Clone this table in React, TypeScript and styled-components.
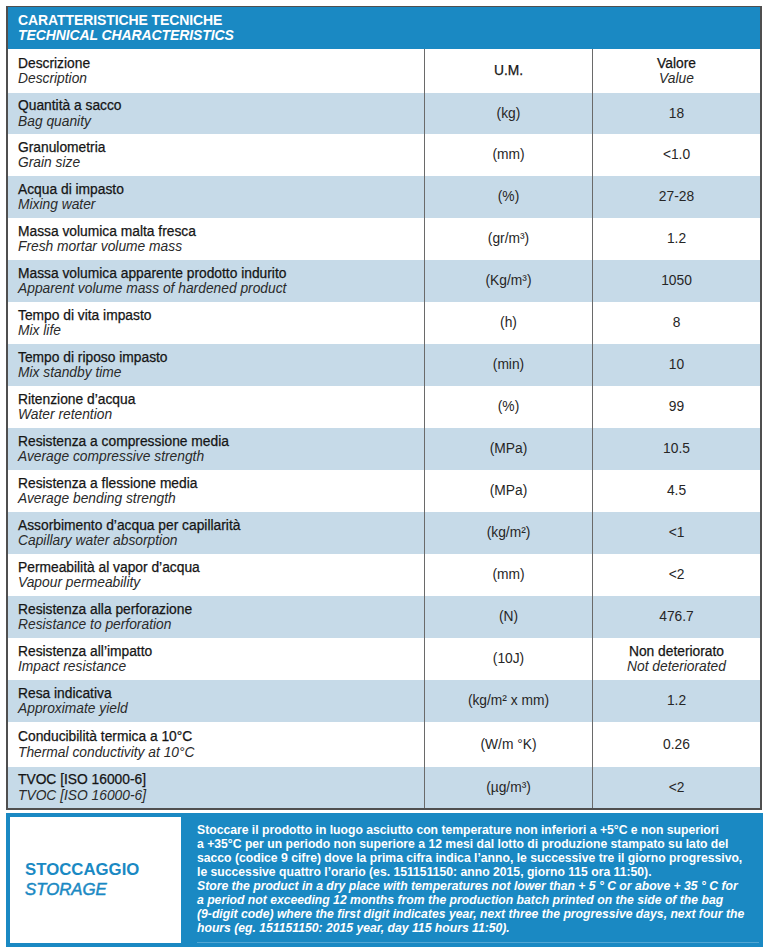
import React from 'react'
import styled, { createGlobalStyle } from 'styled-components'

const GlobalStyle = createGlobalStyle`
  html, body {
    margin: 0;
    padding: 0;
    background: #ffffff;
    font-family: "Liberation Sans", Arial, sans-serif;
    color: #1c1c1c;
  }
`

const BLUE = '#1a89c3'
const STRIPE = '#c6dae8'

type Row = {
  it: string
  en: string
  um: string
  value: string
  valueEn?: string
  h?: number
}

const rows: Row[] = [
  { it: 'Quantità a sacco', en: 'Bag quanity', um: '(kg)', value: '18', h: 41 },
  { it: 'Granulometria', en: 'Grain size', um: '(mm)', value: '<1.0' },
  { it: 'Acqua di impasto', en: 'Mixing water', um: '(%)', value: '27-28' },
  { it: 'Massa volumica malta fresca', en: 'Fresh mortar volume mass', um: '(gr/m³)', value: '1.2' },
  { it: 'Massa volumica apparente prodotto indurito', en: 'Apparent volume mass of hardened product', um: '(Kg/m³)', value: '1050' },
  { it: 'Tempo di vita impasto', en: 'Mix life', um: '(h)', value: '8' },
  { it: 'Tempo di riposo impasto', en: 'Mix standby time', um: '(min)', value: '10' },
  { it: 'Ritenzione d’acqua', en: 'Water retention', um: '(%)', value: '99' },
  { it: 'Resistenza a compressione media', en: 'Average compressive strength', um: '(MPa)', value: '10.5' },
  { it: 'Resistenza a flessione media', en: 'Average bending strength', um: '(MPa)', value: '4.5' },
  { it: 'Assorbimento d’acqua per capillarità', en: 'Capillary water absorption', um: '(kg/m²)', value: '<1' },
  { it: 'Permeabilità al vapor d’acqua', en: 'Vapour permeability', um: '(mm)', value: '<2' },
  { it: 'Resistenza alla perforazione', en: 'Resistance to perforation', um: '(N)', value: '476.7' },
  { it: 'Resistenza all’impatto', en: 'Impact resistance', um: '(10J)', value: 'Non deteriorato', valueEn: 'Not deteriorated' },
  { it: 'Resa indicativa', en: 'Approximate yield', um: '(kg/m² x mm)', value: '1.2' },
  { it: 'Conducibilità termica a 10°C', en: 'Thermal conductivity at 10°C', um: '(W/m °K)', value: '0.26', h: 45 },
  { it: 'TVOC [ISO 16000-6]', en: 'TVOC [ISO 16000-6]', um: '(µg/m³)', value: '<2', h: 41 },
]

const storageIt = [
  'Stoccare il prodotto in luogo asciutto con temperature non inferiori a +5°C e non superiori',
  'a +35°C per un periodo non superiore a 12 mesi dal lotto di produzione stampato su lato del',
  'sacco (codice 9 cifre) dove la prima cifra indica l’anno, le successive tre il giorno progressivo,',
  'le successive quattro l’orario (es. 151151150: anno 2015, giorno 115 ora 11:50).',
]

const storageEn = [
  'Store the product in a dry place with temperatures not lower than + 5 ° C or above + 35 ° C for',
  'a period not exceeding 12 months from the production batch printed on the side of the bag',
  '(9-digit code) where the first digit indicates year, next three the progressive days, next four the',
  'hours (eg. 151151150: 2015 year, day 115 hours 11:50).',
]

const Page = styled.div`
  width: 768px;
  padding: 6px 0 0 6px;
  box-sizing: border-box;
`

const Table = styled.div`
  width: 756px;
  border: 2px solid #4f4f4f;
  border-top-width: 1px;
  box-sizing: border-box;
`

const TableHeader = styled.div`
  background: ${BLUE};
  height: 42px;
  padding: 0 0 0 10px;
  display: flex;
  flex-direction: column;
  justify-content: center;
  color: #ffffff;
  font-weight: bold;
  font-size: 14px;
  line-height: 15px;
`

const HeaderLine = styled.div<{ $italic?: boolean }>`
  font-style: ${(p) => (p.$italic ? 'italic' : 'normal')};
  letter-spacing: -0.1px;
`

const Row = styled.div<{ $stripe?: boolean; $h: number }>`
  display: grid;
  grid-template-columns: 416px 168px 1fr;
  height: ${(p) => p.$h}px;
  background: ${(p) => (p.$stripe ? STRIPE : '#ffffff')};
`

const Cell = styled.div<{ $center?: boolean; $divider?: boolean }>`
  display: flex;
  flex-direction: column;
  justify-content: center;
  align-items: ${(p) => (p.$center ? 'center' : 'flex-start')};
  text-align: ${(p) => (p.$center ? 'center' : 'left')};
  padding-left: ${(p) => (p.$center ? '0' : '10px')};
  border-left: ${(p) => (p.$divider ? '1px solid #6a6a6a' : 'none')};
  font-size: 13.8px;
  line-height: 15.5px;
  white-space: nowrap;
`

const Main = styled.span`
  color: #151515;
  -webkit-text-stroke: 0.25px #151515;
`

const Sub = styled.span`
  font-style: italic;
  color: #2a2a2a;
`

const Plain = styled.span`
  color: #262626;
`

const Storage = styled.div`
  margin-top: 3px;
  width: 757px;
  height: 134px;
  box-sizing: border-box;
  background: ${BLUE};
  padding: 4px;
  display: flex;
  gap: 16px;
`

const StorageTitle = styled.div`
  width: 171px;
  background: #ffffff;
  display: flex;
  flex-direction: column;
  justify-content: center;
  padding-left: 15px;
  box-sizing: border-box;
  color: ${BLUE};
  font-weight: bold;
  font-size: 16.8px;
  line-height: 20px;
`

const TitleLine = styled.div<{ $italic?: boolean }>`
  font-style: ${(p) => (p.$italic ? 'italic' : 'normal')};
  font-weight: ${(p) => (p.$italic ? 'normal' : 'bold')};
  -webkit-text-stroke: ${(p) => (p.$italic ? `0.5px ${BLUE}` : '0')};
`

const StorageText = styled.div`
  flex: 1;
  display: flex;
  flex-direction: column;
  justify-content: center;
  color: #ffffff;
  font-weight: bold;
  font-size: 12.2px;
  line-height: 14px;
  padding-bottom: 2px;
  border-bottom: 1px solid rgba(255, 255, 255, 0.25);
`

const TextLine = styled.div<{ $italic?: boolean }>`
  white-space: nowrap;
  font-style: ${(p) => (p.$italic ? 'italic' : 'normal')};
`

export default function App() {
  return (
    <>
      <GlobalStyle />
      <Page>
        <Table>
          <TableHeader>
            <HeaderLine>CARATTERISTICHE TECNICHE</HeaderLine>
            <HeaderLine $italic>TECHNICAL CHARACTERISTICS</HeaderLine>
          </TableHeader>
          <Row $h={44}>
            <Cell>
              <Main>Descrizione</Main>
              <Sub>Description</Sub>
            </Cell>
            <Cell $center $divider>
              <Main>U.M.</Main>
            </Cell>
            <Cell $center $divider>
              <Main>Valore</Main>
              <Sub>Value</Sub>
            </Cell>
          </Row>
          {rows.map((r, i) => (
            <Row key={r.it + i} $stripe={i % 2 === 0} $h={r.h ?? 42}>
              <Cell>
                <Main>{r.it}</Main>
                <Sub>{r.en}</Sub>
              </Cell>
              <Cell $center $divider>
                <Plain>{r.um}</Plain>
              </Cell>
              <Cell $center $divider>
                {r.valueEn ? (
                  <>
                    <Main>{r.value}</Main>
                    <Sub>{r.valueEn}</Sub>
                  </>
                ) : (
                  <Plain>{r.value}</Plain>
                )}
              </Cell>
            </Row>
          ))}
        </Table>
        <Storage>
          <StorageTitle>
            <TitleLine>STOCCAGGIO</TitleLine>
            <TitleLine $italic>STORAGE</TitleLine>
          </StorageTitle>
          <StorageText>
            {storageIt.map((l) => (
              <TextLine key={l}>{l}</TextLine>
            ))}
            {storageEn.map((l) => (
              <TextLine key={l} $italic>
                {l}
              </TextLine>
            ))}
          </StorageText>
        </Storage>
      </Page>
    </>
  )
}
